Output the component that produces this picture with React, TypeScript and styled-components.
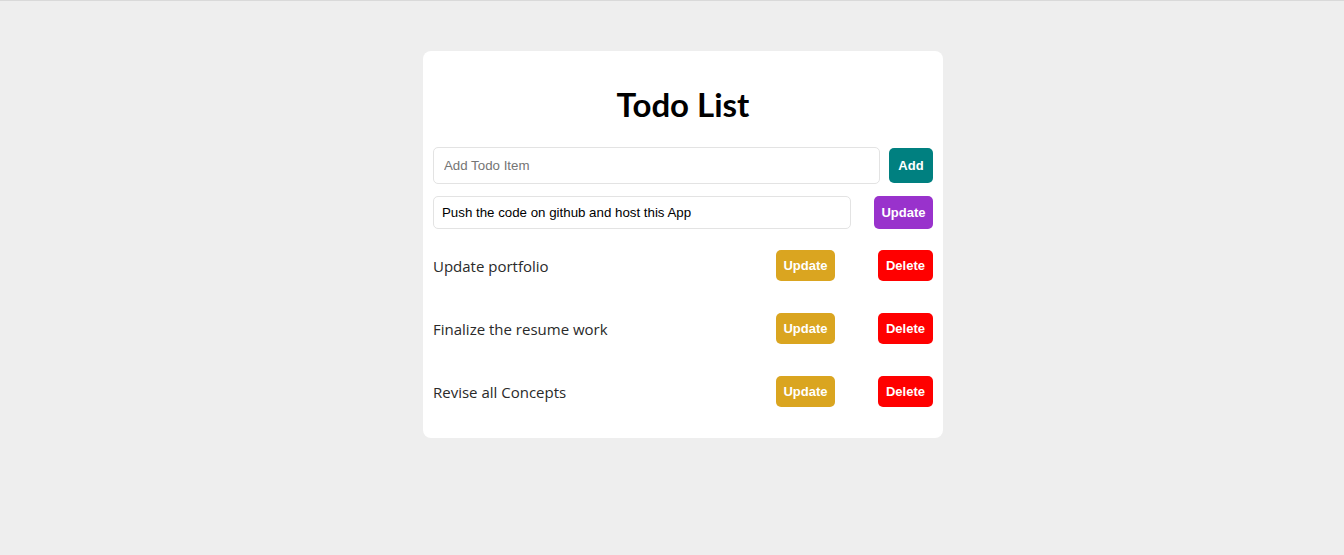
import React, { useState } from "react";
import styled, { createGlobalStyle } from "styled-components";

const GlobalStyle = createGlobalStyle`
  html, body {
    margin: 0;
    padding: 0;
    background: #eeeeee;
  }
  body {
    border-top: 1px solid #d9d9d9;
    min-height: 554px;
    font-family: "Open Sans", "Noto Sans", sans-serif;
  }
`;

const Page = styled.div`
  display: flex;
  justify-content: center;
  padding: 50px 0 0 22px;
`;

const Card = styled.div`
  width: 520px;
  box-sizing: border-box;
  background: #ffffff;
  border-radius: 8px;
  padding: 29px 10px 15px;
`;

const Title = styled.h1`
  margin: 0 0 19px;
  text-align: center;
  font-family: "Lato", "Open Sans", sans-serif;
  font-weight: 700;
  font-size: 33px;
  line-height: 48px;
  color: #000;
`;

const FormRow = styled.div<{ $gap: number; $mt?: number }>`
  display: flex;
  align-items: center;
  gap: ${(p) => p.$gap}px;
  margin-top: ${(p) => p.$mt ?? 0}px;
`;

const TextInput = styled.input<{ $h: number; $pl: number }>`
  flex: 1;
  min-width: 0;
  box-sizing: border-box;
  height: ${(p) => p.$h}px;
  padding: 0 0 0 ${(p) => p.$pl}px;
  border: 1px solid #e3e3e3;
  border-radius: 5px;
  font-family: "Liberation Sans", Arial, sans-serif;
  font-size: 13.3px;
  color: #000;
  outline: none;
  &::placeholder {
    color: #757575;
  }
`;

const Button = styled.button<{ $bg: string; $w: number; $h: number }>`
  flex: none;
  width: ${(p) => p.$w}px;
  height: ${(p) => p.$h}px;
  padding: 0;
  border: none;
  border-radius: 5px;
  background: ${(p) => p.$bg};
  color: #ffffff;
  font-family: "Liberation Sans", Arial, sans-serif;
  font-weight: 700;
  font-size: 13px;
  cursor: pointer;
`;

const List = styled.ul`
  list-style: none;
  margin: 5px 0 0;
  padding: 0;
`;

const Item = styled.li`
  display: flex;
  align-items: center;
  padding: 16px 0;
`;

const ItemText = styled.span`
  flex: 1;
  font-family: "Open Sans", "Noto Sans", sans-serif;
  font-size: 15px;
  color: #2a2a2a;
  padding-top: 1px;
`;

const Actions = styled.div`
  display: flex;
  gap: 43px;
`;

const todos = ["Update portfolio", "Finalize the resume work", "Revise all Concepts"];

export default function App() {
  const [editText, setEditText] = useState("Push the code on github and host this App");
  return (
    <>
      <GlobalStyle />
      <Page>
        <Card>
          <Title>Todo List</Title>
          <FormRow $gap={9}>
            <TextInput $h={37} $pl={10} placeholder="Add Todo Item" />
            <Button $bg="#008080" $w={44} $h={35}>Add</Button>
          </FormRow>
          <FormRow $gap={23} $mt={12}>
            <TextInput $h={33} $pl={8} value={editText} onChange={(e) => setEditText(e.target.value)} />
            <Button $bg="#9932cc" $w={59} $h={33}>Update</Button>
          </FormRow>
          <List>
            {todos.map((t) => (
              <Item key={t}>
                <ItemText>{t}</ItemText>
                <Actions>
                  <Button $bg="#daa520" $w={59} $h={31}>Update</Button>
                  <Button $bg="#ff0000" $w={55} $h={31}>Delete</Button>
                </Actions>
              </Item>
            ))}
          </List>
        </Card>
      </Page>
    </>
  );
}
